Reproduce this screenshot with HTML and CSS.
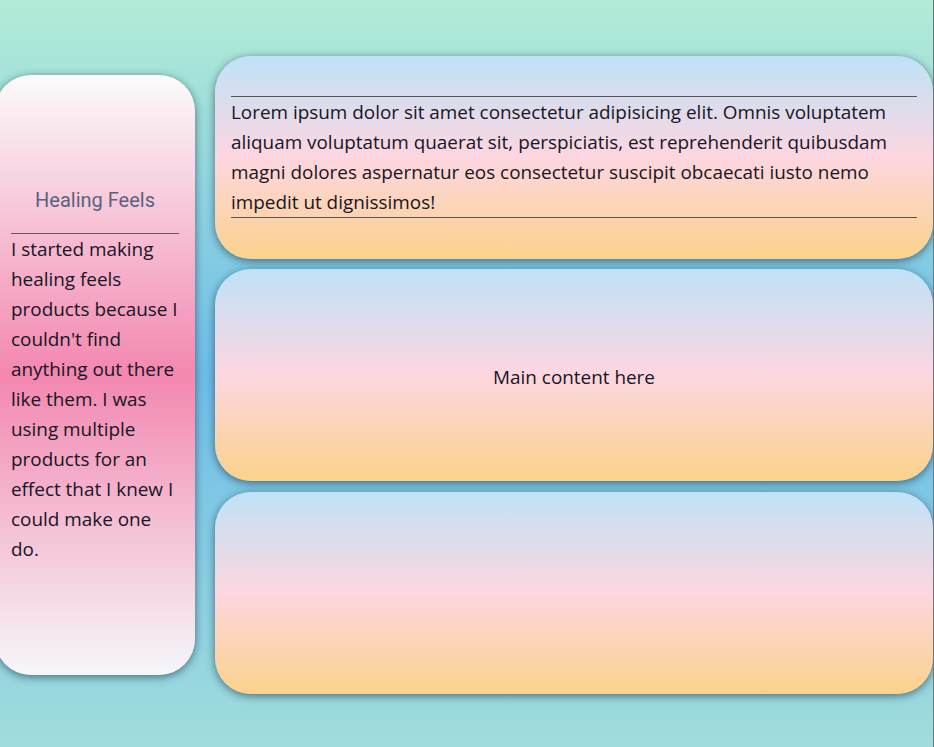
FILE: index.html
```html
<!DOCTYPE html>
<html lang="en">
<head>
<meta charset="utf-8">
<title>Healing Feels</title>
<link rel="stylesheet" href="styles.css">
</head>
<body>
<div class="page">
  <aside class="sidebar">
    <h2 class="side-title">Healing Feels</h2>
    <p class="side-text">I started making healing feels products because I couldn't find anything out there like them. I was using multiple products for an effect that I knew I could make one do.</p>
  </aside>
  <main class="main">
    <section class="card card-intro">
      <p class="intro-text">Lorem ipsum dolor sit amet consectetur adipisicing elit. Omnis voluptatem aliquam voluptatum quaerat sit, perspiciatis, est reprehenderit quibusdam magni dolores aspernatur eos consectetur suscipit obcaecati iusto nemo impedit ut dignissimos!</p>
    </section>
    <section class="card card-main">
      <p class="main-text">Main content here</p>
    </section>
    <section class="card card-empty"></section>
  </main>
</div>
</body>
</html>
```

FILE: styles.css
```css
html, body {
  margin: 0;
  padding: 0;
  height: 100%;
}
body {
  font-family: "Open Sans", "Noto Sans", sans-serif;
  color: #161626;
  background: linear-gradient(to bottom, #b3ecd6 0%, #6ebde9 50%, #a0dcdc 100%);
  overflow: hidden;
}
.page {
  box-sizing: border-box;
  width: 934px;
  height: 747px;
  border-right: 1px solid #6c7a80;
  display: flex;
  align-items: center;
  overflow: hidden;
  padding-top: 3px;
}
.sidebar {
  box-sizing: border-box;
  flex: 0 0 200px;
  width: 200px;
  height: 600px;
  margin-left: -5px;
  margin-top: 0;
  padding: 2px 16px 0;
  border-radius: 36px;
  background: linear-gradient(to bottom, #fbfbfb 0%, #f387b0 50%, #f5f7fa 100%);
  box-shadow: 0 2px 8px rgba(20, 40, 60, 0.6);
  display: flex;
  flex-direction: column;
  justify-content: center;
}
.side-title {
  margin: 0;
  padding-bottom: 21px;
  border-bottom: 1px solid #6a5560;
  font-family: Roboto, "Noto Sans", sans-serif;
  font-weight: 400;
  font-size: 20px;
  line-height: 24px;
  color: #56657f;
  text-align: center;
}
.side-text {
  margin: 0;
  font-size: 18.9px;
  line-height: 30px;
}
.main {
  flex: 0 0 718px;
  width: 718px;
  margin-left: 20px;
  display: flex;
  flex-direction: column;
  gap: 10px;
}
.card {
  box-sizing: border-box;
  border-radius: 36px;
  background: linear-gradient(to bottom, #bfe2f7 0%, #fdd6e0 50%, #fbd28b 100%);
  box-shadow: 0 2px 8px rgba(20, 40, 60, 0.6);
}
.card-intro {
  padding: 40px 16px 41px;
}
.intro-text {
  margin: 0;
  border-top: 1px solid #555;
  border-bottom: 1px solid #555;
  font-size: 18.9px;
  line-height: 30px;
}
.card-main {
  height: 212px;
  padding-top: 3px;
  display: flex;
  align-items: center;
  justify-content: center;
}
.main-text {
  margin: 0;
  font-size: 18.9px;
  line-height: 30px;
}
.card-empty {
  height: 202px;
  margin-top: 1px;
}
```
